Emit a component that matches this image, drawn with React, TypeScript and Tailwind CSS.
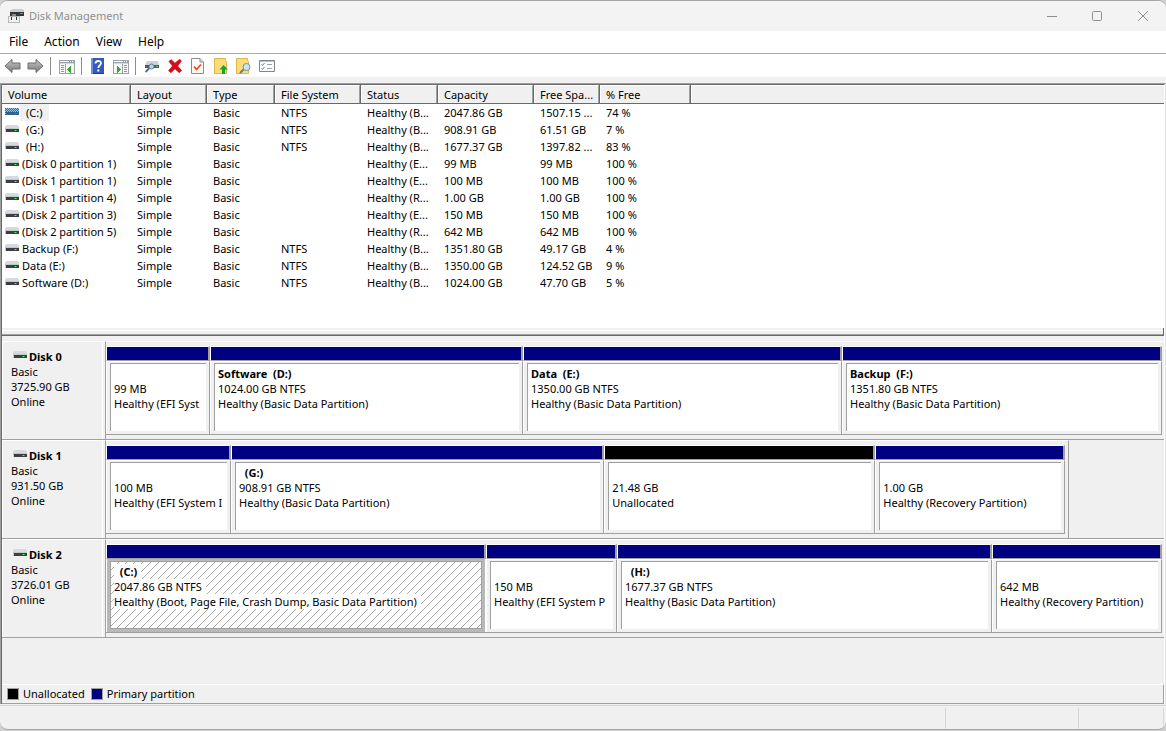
import type { ReactNode } from "react";

type Volume = {
  name: string;
  fs: string;
  status: string;
  capacity: string;
  free: string;
  percent: string;
  selected?: boolean;
};

type Partition = {
  name?: string;
  size: string;
  status: string;
  span: number;
  unallocated?: boolean;
  selected?: boolean;
};

type Disk = {
  name: string;
  capacity: string;
  rest: number;
  partitions: Partition[];
};

const volumes: Volume[] = [
  { name: " (C:)", fs: "NTFS", status: "Healthy (B...", capacity: "2047.86 GB", free: "1507.15 ...", percent: "74 %", selected: true },
  { name: " (G:)", fs: "NTFS", status: "Healthy (B...", capacity: "908.91 GB", free: "61.51 GB", percent: "7 %" },
  { name: " (H:)", fs: "NTFS", status: "Healthy (B...", capacity: "1677.37 GB", free: "1397.82 ...", percent: "83 %" },
  { name: "(Disk 0 partition 1)", fs: "", status: "Healthy (E...", capacity: "99 MB", free: "99 MB", percent: "100 %" },
  { name: "(Disk 1 partition 1)", fs: "", status: "Healthy (E...", capacity: "100 MB", free: "100 MB", percent: "100 %" },
  { name: "(Disk 1 partition 4)", fs: "", status: "Healthy (R...", capacity: "1.00 GB", free: "1.00 GB", percent: "100 %" },
  { name: "(Disk 2 partition 3)", fs: "", status: "Healthy (E...", capacity: "150 MB", free: "150 MB", percent: "100 %" },
  { name: "(Disk 2 partition 5)", fs: "", status: "Healthy (R...", capacity: "642 MB", free: "642 MB", percent: "100 %" },
  { name: "Backup (F:)", fs: "NTFS", status: "Healthy (B...", capacity: "1351.80 GB", free: "49.17 GB", percent: "4 %" },
  { name: "Data (E:)", fs: "NTFS", status: "Healthy (B...", capacity: "1350.00 GB", free: "124.52 GB", percent: "9 %" },
  { name: "Software (D:)", fs: "NTFS", status: "Healthy (B...", capacity: "1024.00 GB", free: "47.70 GB", percent: "5 %" },
];

const disks: Disk[] = [
  {
    name: "Disk 0",
    capacity: "3725.90 GB",
    rest: 0,
    partitions: [
      { size: "99 MB", status: "Healthy (EFI Syst", span: 104 },
      { name: "Software  (D:)", size: "1024.00 GB NTFS", status: "Healthy (Basic Data Partition)", span: 313 },
      { name: "Data  (E:)", size: "1350.00 GB NTFS", status: "Healthy (Basic Data Partition)", span: 319 },
      { name: "Backup  (F:)", size: "1351.80 GB NTFS", status: "Healthy (Basic Data Partition)", span: 320 },
    ],
  },
  {
    name: "Disk 1",
    capacity: "931.50 GB",
    rest: 95,
    partitions: [
      { size: "100 MB", status: "Healthy (EFI System I", span: 125 },
      { name: "  (G:)", size: "908.91 GB NTFS", status: "Healthy (Basic Data Partition)", span: 373 },
      { size: "21.48 GB", status: "Unallocated", span: 271, unallocated: true },
      { size: "1.00 GB", status: "Healthy (Recovery Partition)", span: 190 },
    ],
  },
  {
    name: "Disk 2",
    capacity: "3726.01 GB",
    rest: 0,
    partitions: [
      { name: "  (C:)", size: "2047.86 GB NTFS", status: "Healthy (Boot, Page File, Crash Dump, Basic Data Partition)", span: 380, selected: true },
      { size: "150 MB", status: "Healthy (EFI System P", span: 131 },
      { name: "  (H:)", size: "1677.37 GB NTFS", status: "Healthy (Basic Data Partition)", span: 375 },
      { size: "642 MB", status: "Healthy (Recovery Partition)", span: 170 },
    ],
  },
];

const columns = [
  { label: "Volume", width: "w-[129px]" },
  { label: "Layout", width: "w-[76px]" },
  { label: "Type", width: "w-[68px]" },
  { label: "File System", width: "w-[86px]" },
  { label: "Status", width: "w-[77px]" },
  { label: "Capacity", width: "w-[96px]" },
  { label: "Free Spa...", width: "w-[66px]" },
  { label: "% Free", width: "w-[91px]" },
];

const DriveIcon = ({ selected = false }: { selected?: boolean }) => (
  <svg width="14" height="7" viewBox="0 0 14 7" shapeRendering="crispEdges" className="shrink-0" aria-hidden="true">
    {selected ? (
      <>
        <defs>
          <pattern id="dither" width="2" height="2" patternUnits="userSpaceOnUse">
            <path d="M0 0h1v1H0zM1 1h1v1H1z" fill="#0078d7" />
          </pattern>
        </defs>
        <path d="M0 0h14v7H0z" fill="#9cc6e8" />
        <path d="M1 4h13v3H1z" fill="#2a5a8a" />
        <path d="M0 0h14v7H0z" fill="url(#dither)" />
        <path d="M10 5h2v1h-2z" fill="#149a8c" />
      </>
    ) : (
      <>
        <path d="M1 0h12v1h1v3H0V1h1z" fill="#d6d9dd" />
        <path d="M0 3h14v4H0z" fill="#c3c7ca" />
        <path d="M1 4h13v3H1z" fill="#3c3f41" />
        <path d="M9 5h3v1H9z" fill="#17a82c" />
        <path d="M10 5h1v1h-1z" fill="#3dff4f" />
      </>
    )}
  </svg>
);

const AppIcon = () => (
  <svg width="16" height="16" viewBox="0 0 16 16" shapeRendering="crispEdges" aria-hidden="true">
    <path d="M4 1h11v1h1v2H2V2h2z" fill="#c9cdd0" />
    <path d="M2 4h14v4H2z" fill="#34373a" />
    <path d="M12 5h3v1h-3z" fill="#21d33a" />
    <path d="M0 8h12v7H0z" fill="#b4b8bb" />
    <path d="M1 9h10v5H1z" fill="#eef0f1" />
    <path d="M3 9h1v3H3zM8 9h1v3H8z" fill="#33373a" />
    <path d="M4 6h4v2H4z" fill="#85898c" />
  </svg>
);

const Arrow = ({ flip = false }: { flip?: boolean }) => (
  <svg width="17" height="16" viewBox="0 0 17 16" className={flip ? "-scale-x-100" : ""} aria-hidden="true">
    <defs>
      <linearGradient id="metal" x1="0" y1="0" x2="0" y2="1">
        <stop offset="0" stopColor="#c9c9c9" />
        <stop offset="0.5" stopColor="#a0a0a0" />
        <stop offset="1" stopColor="#777" />
      </linearGradient>
    </defs>
    <path d="M1 8 8 1.500V5h8v6H8v3.500z" fill="url(#metal)" stroke="#6c6c6c" strokeLinejoin="round" />
  </svg>
);

const PaneIcon = ({ right = false }: { right?: boolean }) => (
  <svg width="16" height="16" viewBox="0 0 16 16" shapeRendering="crispEdges" aria-hidden="true">
    <path d="M0 2h16v14H0z" fill="#9aa1a9" />
    <path d="M1 6h14v9H1z" fill="#f6f7f8" />
    <path d="M1 3h9v1H1zM11 3h1v1h-1zM13 3h1v1h-1z" fill="#fff" />
    <path d="M1 5h14v1H1z" fill="#d5d9dd" />
    {right ? (
      <>
        <path d="M9 6h1v9H9z" fill="#9aa1a9" />
        <path d="M11 7h3v1h-3zM11 9h3v1h-3zM11 11h3v1h-3zM11 13h3v1h-3z" fill="#8798ab" />
        <path d="M4 8h1v1h1v1h1v1h1v1H7v1H6v1H5v1H4z" fill="#35a82b" />
      </>
    ) : (
      <>
        <path d="M6 6h1v9H6z" fill="#9aa1a9" />
        <path d="M2 7h3v1H2zM2 9h3v1H2zM2 11h3v1H2zM2 13h3v1H2z" fill="#8798ab" />
        <path d="M12 8h-1v1h-1v1H9v1H8v1h1v1h1v1h1v1h1z" fill="#35a82b" />
      </>
    )}
  </svg>
);

const HelpIcon = () => (
  <svg width="13" height="16" viewBox="0 0 13 16" aria-hidden="true">
    <path d="M0 0h13v16H0z" fill="#3259be" />
    <path d="M0 0h2v16H0z" fill="#6e8fdc" />
    <path d="M2 15h11v1H2z" fill="#1d3b8c" />
    <path d="M4.500 5.500C4.500 2.300 10 2.100 10 5.200 10 7.300 7.300 7.200 7.300 10" fill="none" stroke="#fff" strokeWidth="1.800" />
    <path d="M6.300 11.500h2v2h-2z" fill="#fff" />
  </svg>
);

const ScanDriveIcon = () => (
  <svg width="16" height="16" viewBox="0 0 16 16" aria-hidden="true">
    <path d="M3 3h11l1 4H1z" fill="#cfd3d6" />
    <path d="M1 7h14v3H1z" fill="#54585b" />
    <path d="M12 8h2v1h-2z" fill="#2be03f" />
    <path d="m1.500 14 4-4" stroke="#5c7180" strokeWidth="2" />
    <circle cx="7.500" cy="8.500" r="2.500" fill="#b5d9f0" stroke="#5f7f96" />
  </svg>
);

const DeleteIcon = () => (
  <svg width="14" height="14" viewBox="0 0 14 14" aria-hidden="true">
    <path d="M1 2.500 3 .5l4 3.700L11.500.3l2 1.700L9.600 7l4 4.500-2.400 2.200L7 9.700l-4 4-2.500-2L4.500 7z" fill="#dd0a14" stroke="#b00010" strokeWidth="0.600" />
  </svg>
);

const CheckDocIcon = () => (
  <svg width="13" height="16" viewBox="0 0 13 16" aria-hidden="true">
    <path d="M.5.5h8.500l3.500 3.500v11.500H.5z" fill="#fbfbfb" stroke="#8b8b8b" />
    <path d="M9 .5V4h3.500" fill="#e2e2e2" stroke="#8b8b8b" />
    <path d="m3 8.500 2.500 3L10 6.500" fill="none" stroke="#e8501c" strokeWidth="1.800" />
  </svg>
);

const FolderUpIcon = () => (
  <svg width="14" height="16" viewBox="0 0 14 16" aria-hidden="true">
    <path d="M.5.5h11v2l1 1v12H.5z" fill="#fbdc78" stroke="#e3b548" />
    <path d="M9.500 7 14 11.500h-3V16H8v-4.500H5.500z" fill="#18a330" />
  </svg>
);

const FolderSearchIcon = () => (
  <svg width="15" height="16" viewBox="0 0 15 16" aria-hidden="true">
    <path d="M.5.5h11v2l1 1v12H.5z" fill="#fbdc78" stroke="#e3b548" />
    <path d="m4 15 4-4" stroke="#6d7c87" strokeWidth="2" />
    <circle cx="10.500" cy="9" r="3.500" fill="#c6e4f6" stroke="#7595aa" />
  </svg>
);

const ChecklistIcon = () => (
  <svg width="16" height="12" viewBox="0 0 16 12" aria-hidden="true">
    <path d="M.5.5h15v11H.5z" fill="#fdfdfd" stroke="#7c8791" />
    <path d="M1 1h14v1H1z" fill="#b8c0c7" />
    <path d="m2.500 4.500 1 1 2-2.500M2.500 8.500l1 1 2-2.500" fill="none" stroke="#2a85d8" />
    <path d="M8 4.500h5M8 8.500h5" stroke="#9aa2a9" />
  </svg>
);

const ToolButton = ({ label, children }: { label: string; children: ReactNode }) => (
  <button type="button" aria-label={label} className="flex h-[22px] w-[23px] items-center justify-center">
    {children}
  </button>
);

const ToolSeparator = () => (
  <div className="w-2 pl-[3px]">
    <div className="h-[18px] w-px bg-[#8d8d8d]" />
  </div>
);

const TitleBar = () => (
  <header className="flex h-[30px] shrink-0 items-center bg-[#f3f3f3] pl-2 text-[#8f8f8f]">
    <AppIcon />
    <h1 className="ml-[5px] flex-1">Disk Management</h1>
    <button type="button" aria-label="Minimize" className="flex h-full w-[46px] items-center justify-center">
      <svg width="10" height="10" viewBox="0 0 10 10" stroke="currentColor" aria-hidden="true">
        <path d="M0 5.500h10" />
      </svg>
    </button>
    <button type="button" aria-label="Maximize" className="flex h-full w-11 items-center justify-center">
      <svg width="10" height="10" viewBox="0 0 10 10" fill="none" stroke="currentColor" aria-hidden="true">
        <rect x="0.500" y="0.500" width="9" height="9" rx="1" />
      </svg>
    </button>
    <button type="button" aria-label="Close" className="flex h-full w-[47px] items-center justify-center">
      <svg width="10" height="10" viewBox="0 0 10 10" stroke="currentColor" aria-hidden="true">
        <path d="m0 0 10 10M10 0 0 10" />
      </svg>
    </button>
  </header>
);

const Toolbar = () => (
  <div className="flex h-[23px] shrink-0 items-center bg-white pl-px">
    <ToolButton label="Back"><Arrow /></ToolButton>
    <ToolButton label="Forward"><Arrow flip /></ToolButton>
    <ToolSeparator />
    <ToolButton label="Show or hide console tree"><PaneIcon /></ToolButton>
    <ToolSeparator />
    <ToolButton label="Help"><HelpIcon /></ToolButton>
    <ToolButton label="Show or hide action pane"><PaneIcon right /></ToolButton>
    <ToolSeparator />
    <ToolButton label="Rescan disks"><ScanDriveIcon /></ToolButton>
    <ToolButton label="Delete"><DeleteIcon /></ToolButton>
    <ToolButton label="Properties"><CheckDocIcon /></ToolButton>
    <ToolButton label="Open"><FolderUpIcon /></ToolButton>
    <ToolButton label="Explore"><FolderSearchIcon /></ToolButton>
    <ToolButton label="Settings"><ChecklistIcon /></ToolButton>
  </div>
);

const VolumeTable = () => (
  <table className="w-full table-fixed border-separate border-spacing-0 text-left">
    <thead>
      <tr>
        {columns.map((c) => (
          <th key={c.label} className={`${c.width} h-[19px] border-b border-r border-b-[#696969] border-r-[#696969] bg-[#f0f0f0] p-0 font-normal`}>
            <div className="h-[18px] truncate border-l border-r border-t border-l-white border-r-[#a0a0a0] border-t-white pl-[5px] leading-[18px]">
              {c.label}
            </div>
          </th>
        ))}
        <th className="border-b border-b-[#696969] bg-[#f0f0f0] p-0">
          <div className="h-[18px] border-l border-t border-white" />
        </th>
      </tr>
    </thead>
    <tbody>
      {volumes.map((v) => (
        <tr key={v.name} className="whitespace-pre leading-[17px]">
          <td className="h-[17px] p-0">
            <div className="flex items-start pl-[3px]">
              <div className="pt-1">
                <DriveIcon selected={v.selected} />
              </div>
              <span className={v.selected ? "ml-px bg-[#f0f0f0] px-[6px]" : v.name.startsWith(" ") ? "ml-px px-[6px]" : "ml-px px-[2px]"}>
                {v.name.trim()}
              </span>
            </div>
          </td>
          <td className="p-0 pl-[6px]">Simple</td>
          <td className="p-0 pl-[6px]">Basic</td>
          <td className="p-0 pl-[6px]">{v.fs}</td>
          <td className="p-0 pl-[6px]">{v.status}</td>
          <td className="p-0 pl-[6px]">{v.capacity}</td>
          <td className="p-0 pl-[6px]">{v.free}</td>
          <td className="p-0 pl-[6px]">{v.percent}</td>
          <td className="p-0" />
        </tr>
      ))}
    </tbody>
  </table>
);

const Hatching = () => (
  <svg className="absolute inset-0 h-full w-full" aria-hidden="true">
    <defs>
      <pattern id="hatch" width="8" height="8" patternUnits="userSpaceOnUse">
        <path d="M-1 9 9-1M-1 1 1-1M7 9l2-2" stroke="#a0a0a0" strokeWidth="0.900" />
      </pattern>
    </defs>
    <rect width="100%" height="100%" fill="url(#hatch)" />
  </svg>
);

const PartitionCell = ({ partition: p }: { partition: Partition }) => (
  <div className="flex h-[89px] min-w-0 basis-0 flex-col border-b border-b-[#a0a0a0]" style={{ flexGrow: p.span }}>
    <div className="h-[15px] border-b border-l border-r-2 border-t border-b-[#a0a0a0] border-l-white border-r-[#a0a0a0] border-t-white">
      <div className={p.unallocated ? "h-full bg-black" : "h-full bg-[#000080]"} />
    </div>
    <div
      className={
        p.selected
          ? "flex-1 border-l border-r border-l-white border-r-white bg-[#b9b9b9] px-[3px] pb-[3px] pt-[2px]"
          : "flex-1 border-l border-r border-t border-l-white border-r-[#a0a0a0] border-t-white px-[3px] pb-[3px] pt-px"
      }
    >
      <div
        className={
          p.selected
            ? "relative h-full border border-[#a0a0a0] bg-white px-[3px] pt-[2px]"
            : "h-full border-l border-t border-[#a0a0a0] bg-white pl-[3px] pr-px pt-[2px]"
        }
      >
        {p.selected && <Hatching />}
        <div className="relative flex flex-col items-start overflow-hidden whitespace-pre leading-[15px]">
          <strong className={p.selected ? "h-[15px] bg-white pr-1" : "h-[15px]"}>{p.name}</strong>
          <span className={p.selected ? "bg-white pr-1" : ""}>{p.size}</span>
          <span className={p.selected ? "bg-white pr-1" : ""}>{p.status}</span>
        </div>
      </div>
    </div>
  </div>
);

const DiskRow = ({ disk }: { disk: Disk }) => (
  <section className="flex h-[99px] shrink-0" aria-label={disk.name}>
    <div className="w-[104px] border-b border-r border-t border-b-[#a0a0a0] border-r-[#a0a0a0] border-t-white">
      <div className="mr-[2px] h-full border-l border-r border-white pl-2 pt-[7px] leading-[15px]">
        <div className="flex items-start pl-[2px]">
          <div className="pt-[2px]">
            <DriveIcon />
          </div>
          <strong className="ml-[2px]">{disk.name}</strong>
        </div>
        <div>Basic</div>
        <div>{disk.capacity}</div>
        <div>Online</div>
      </div>
    </div>
    <div className="flex min-w-0 flex-1">
      <div
        className={
          disk.rest
            ? "flex min-w-0 basis-0 border-b border-r border-t border-b-[#a0a0a0] border-r-[#a0a0a0] border-t-white pr-[3px] pt-1"
            : "flex min-w-0 basis-0 border-b border-t border-b-[#a0a0a0] border-t-white pr-[2px] pt-1"
        }
        style={{ flexGrow: 1058 - disk.rest }}
      >
        {disk.partitions.map((p, i) => (
          <PartitionCell key={i} partition={p} />
        ))}
      </div>
      {disk.rest > 0 && <div className="basis-0 border-b border-[#a0a0a0]" style={{ flexGrow: disk.rest }} />}
    </div>
  </section>
);

const Legend = () => (
  <div className="flex h-5 shrink-0 items-center border-b border-r border-t border-b-[#a0a0a0] border-r-[#a0a0a0] border-t-white pl-[5px]">
    <span className="size-3 border border-[#a0a0a0] bg-black" />
    <span className="ml-1">Unallocated</span>
    <span className="ml-[6px] size-3 border border-[#a0a0a0] bg-[#000080]" />
    <span className="ml-1">Primary partition</span>
  </div>
);

export default function App() {
  return (
    <div className="h-screen bg-[#d0d0d0] pb-px font-['Noto_Sans','Open_Sans',sans-serif] text-[11px] text-black">
      <div className="flex h-full flex-col overflow-hidden rounded-lg border-b border-t border-[#a6a6a6] bg-[#f0f0f0]">
        <TitleBar />
        <nav className="flex h-[23px] shrink-0 items-center border-b border-[#a5abb2] bg-white pl-px">
          {["File", "Action", "View", "Help"].map((item) => (
            <button key={item} type="button" className="px-2 text-[12px]">
              {item}
            </button>
          ))}
        </nav>
        <Toolbar />

        <main className="mt-[6px] flex min-h-0 flex-1 flex-col border-l border-r border-t border-l-[#a0a0a0] border-r-[#e3e3e3] border-t-[#a0a0a0]">
          <div className="flex min-h-0 flex-1 flex-col border-l border-r border-t border-l-[#696969] border-r-white border-t-[#696969]">
            <div className="h-[243px] shrink-0 bg-white">
              <VolumeTable />
            </div>
            <div className="h-2 shrink-0 border-b border-r border-[#696969]">
              <div className="mt-[2px] h-[5px] border-b border-t border-b-[#a0a0a0] border-t-white" />
            </div>
            <div className="flex min-h-0 flex-1 flex-col pt-[5px]">
              {disks.map((disk) => (
                <DiskRow key={disk.name} disk={disk} />
              ))}
              <div className="flex-1" />
              <Legend />
            </div>
          </div>
        </main>

        <footer className="mt-px flex h-6 shrink-0 border-t border-[#d7d7d7] pr-[2px] pt-[2px]">
          <div className="flex-1 border-r border-[#d7d7d7]" />
          <div className="w-[133px] border-r border-[#d7d7d7]" />
          <div className="w-[85px] border-r border-[#d7d7d7]" />
        </footer>
      </div>
    </div>
  );
}
